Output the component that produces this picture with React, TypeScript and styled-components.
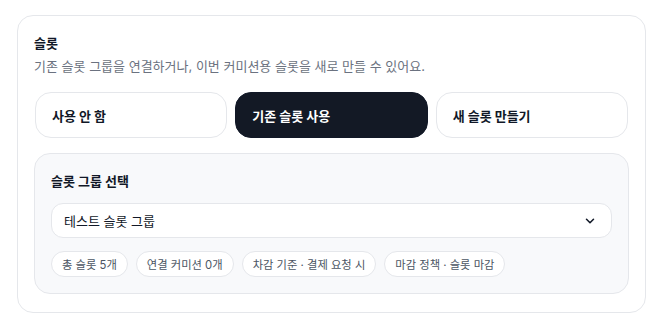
import styled, { createGlobalStyle } from "styled-components";

const GlobalStyle = createGlobalStyle`
	html, body {
		margin: 0;
		padding: 0;
		background: #ffffff;
	}
	body {
		font-family: Inter, "Noto Sans CJK KR", sans-serif;
		color: #111827;
	}
	* {
		box-sizing: border-box;
	}
`;

const Page = styled.div`
	padding: 15px 14px 14px 17px;
`;

const Card = styled.section`
	border: 1px solid #e5e7eb;
	border-radius: 16px;
	padding: 17px 16px 18px 16px;
	background: #ffffff;
`;

const Title = styled.h2`
	margin: 0;
	font-size: 13px;
	line-height: 20px;
	font-weight: 700;
	color: #111827;
`;

const Description = styled.p`
	margin: 3px 0 0;
	font-size: 13px;
	line-height: 20px;
	color: #6b7280;
`;

const OptionRow = styled.div`
	display: grid;
	grid-template-columns: repeat(3, 1fr);
	gap: 8px;
	margin-top: 16px;
	padding: 0 1px;
`;

const Option = styled.button<{ $active?: boolean }>`
	height: 46px;
	padding: 0 16px;
	border-radius: 16px;
	border: 1px solid ${(props) => (props.$active ? "#111827" : "#e5e7eb")};
	background: ${(props) => (props.$active ? "#131925" : "#ffffff")};
	color: ${(props) => (props.$active ? "#ffffff" : "#111827")};
	font-family: inherit;
	font-size: 13px;
	font-weight: 700;
	text-align: left;
	cursor: pointer;
`;

const Panel = styled.div`
	margin-top: 15px;
	border: 1px solid #e5e7eb;
	border-radius: 16px;
	background: #f8f9fb;
	padding: 17px 16px 16px 16px;
`;

const PanelTitle = styled.h3`
	margin: 0;
	font-size: 13px;
	line-height: 20px;
	font-weight: 700;
	color: #111827;
`;

const Select = styled.div`
	margin-top: 12px;
	height: 35px;
	display: flex;
	align-items: center;
	justify-content: space-between;
	padding: 0 14px 0 12px;
	background: #ffffff;
	border: 1px solid #e5e7eb;
	border-radius: 12px;
	font-size: 13px;
	color: #111827;
`;

const ChipRow = styled.div`
	display: flex;
	flex-wrap: wrap;
	gap: 8px;
	margin-top: 13px;
`;

const Chip = styled.span`
	height: 26px;
	display: inline-flex;
	align-items: center;
	padding: 0 10px;
	border: 1px solid #e5e7eb;
	border-radius: 999px;
	background: #ffffff;
	font-size: 11.3px;
	color: #4b5563;
`;

const chips = ["총 슬롯 5개", "연결 커미션 0개", "차감 기준 · 결제 요청 시", "마감 정책 · 슬롯 마감"];

function App() {
	return (
		<Page>
			<GlobalStyle />
			<Card>
				<Title>슬롯</Title>
				<Description>기존 슬롯 그룹을 연결하거나, 이번 커미션용 슬롯을 새로 만들 수 있어요.</Description>
				<OptionRow>
					<Option>사용 안 함</Option>
					<Option $active>기존 슬롯 사용</Option>
					<Option>새 슬롯 만들기</Option>
				</OptionRow>
				<Panel>
					<PanelTitle>슬롯 그룹 선택</PanelTitle>
					<Select>
						<span>테스트 슬롯 그룹</span>
						<svg width="14" height="14" viewBox="0 0 24 24" fill="none" stroke="#111827" strokeWidth="2.6" strokeLinecap="round" strokeLinejoin="round">
							<path d="m6 9 6 6 6-6" />
						</svg>
					</Select>
					<ChipRow>
						{chips.map((c) => (
							<Chip key={c}>{c}</Chip>
						))}
					</ChipRow>
				</Panel>
			</Card>
		</Page>
	);
}

export default App;
